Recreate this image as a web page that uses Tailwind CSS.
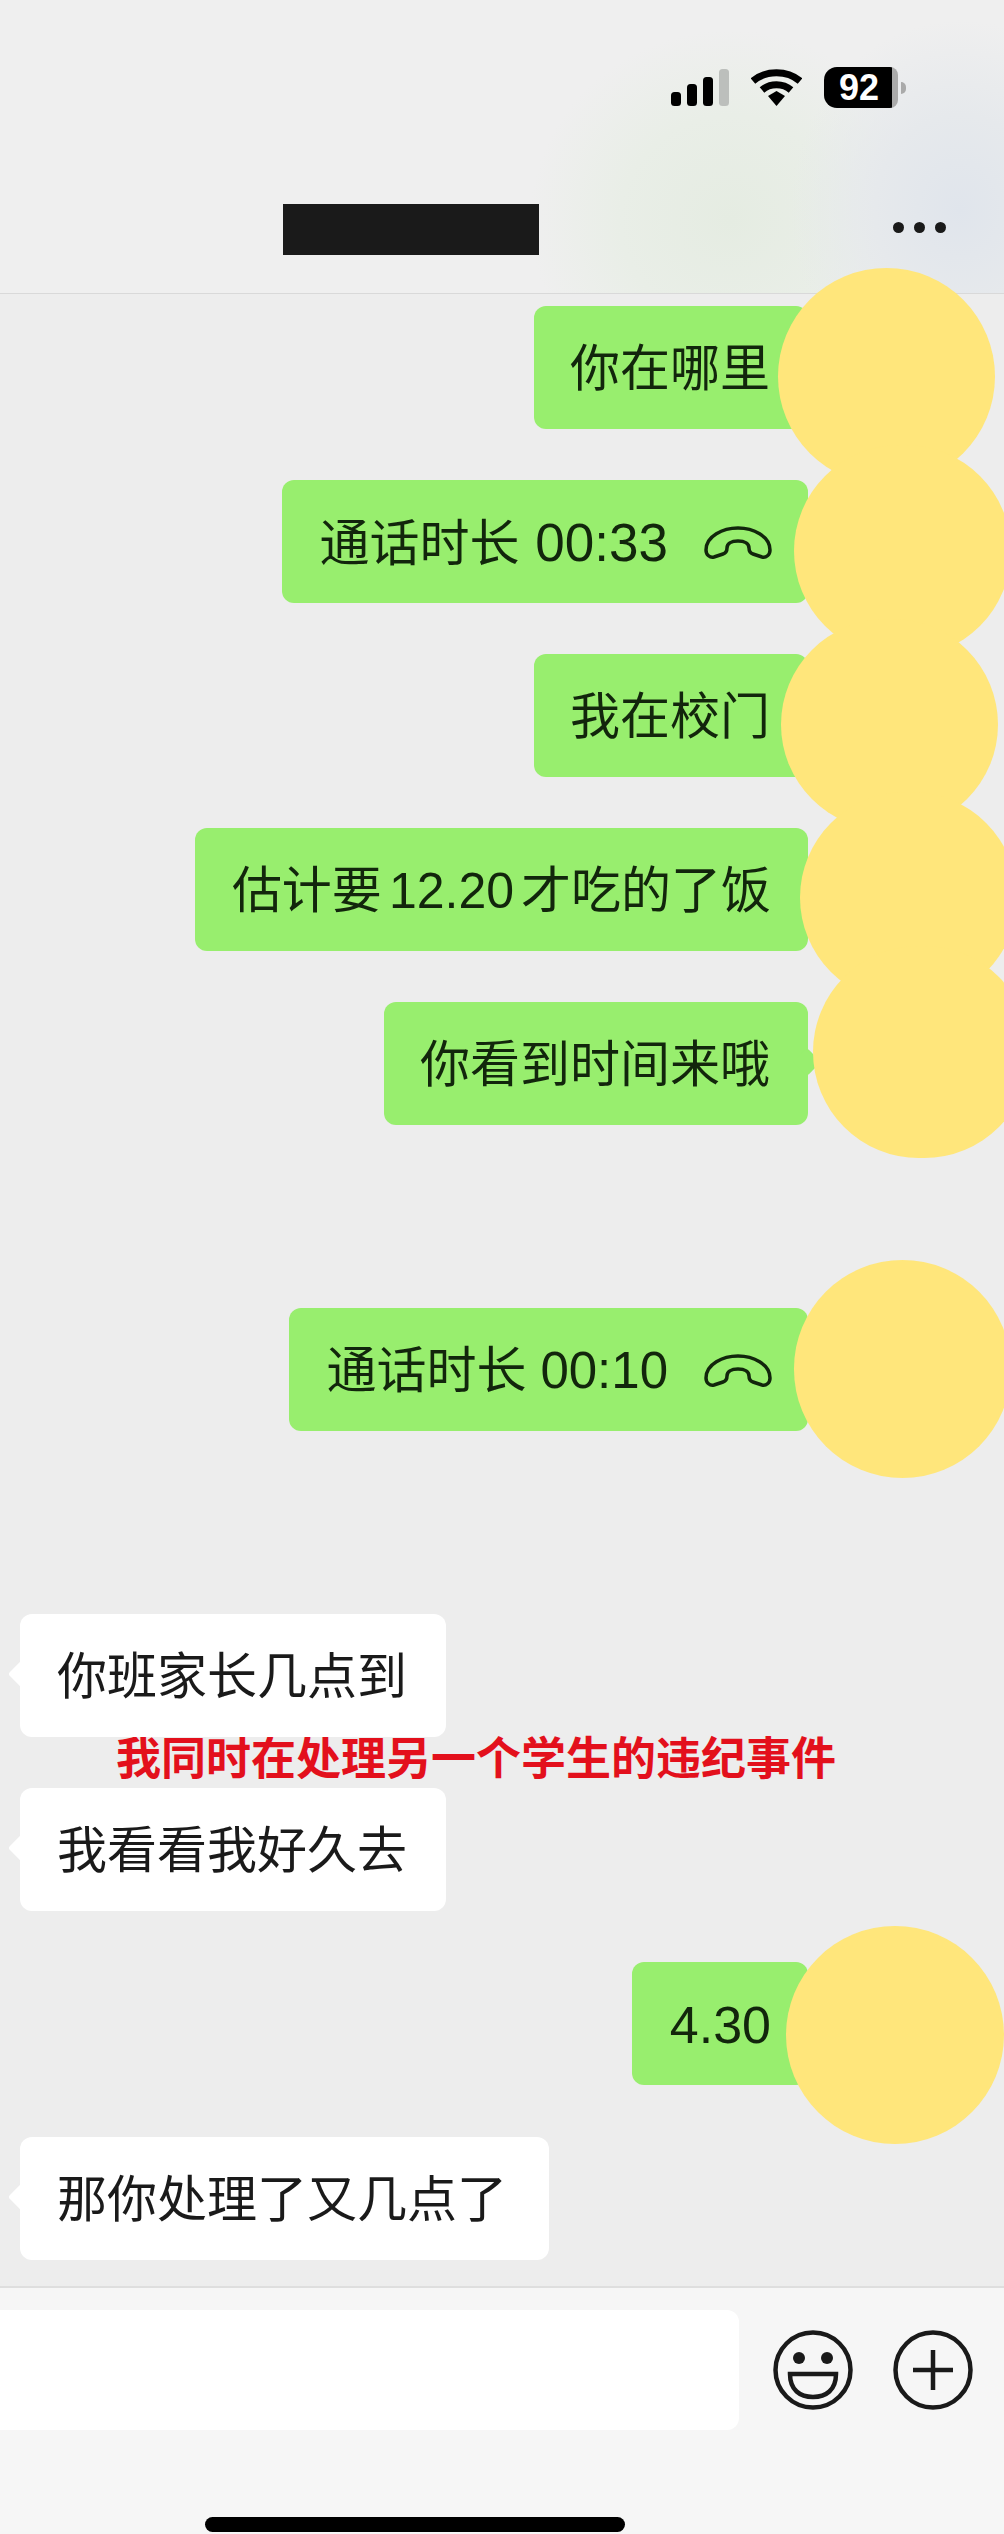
<!DOCTYPE html>
<html lang="zh-CN">
<head>
    <meta charset="UTF-8">
    <title>聊天记录</title>
    <script src="https://cdn.jsdelivr.net/npm/@tailwindcss/browser@4"></script>
</head>
<body class="bg-[#ededed]">
<div class="relative flex flex-col w-[1004px] h-[2534px] overflow-hidden bg-[#ededed] text-[#1a1a1a] text-[50px] font-['Liberation_Sans','Noto_Sans_CJK_SC',sans-serif]">

    <!-- status bar + title -->
    <div class="h-[294px] shrink-0 pt-[67px] border-b border-[#d9d9d9] bg-[#efefef] bg-[radial-gradient(ellipse_170px_190px_at_960px_210px,#e0e5ec_0%,#e6e9ec_50%,transparent_100%),radial-gradient(ellipse_200px_190px_at_730px_220px,#e5ece2_0%,#e9eee7_55%,transparent_100%)]">
        <div class="flex justify-end items-center gap-[22px] pr-[98px] h-[41px]">
            <svg class="w-[58px] h-[37px]" viewBox="0 0 58 37">
                <rect x="0" y="23" width="10" height="14" rx="3.5" fill="#000"/>
                <rect x="16" y="15" width="10" height="22" rx="3.5" fill="#000"/>
                <rect x="32" y="8" width="10" height="29" rx="3.5" fill="#000"/>
                <rect x="48" y="0" width="10" height="37" rx="3.5" fill="#bcbfbc"/>
            </svg>
            <svg class="w-[51px] h-[37px]" viewBox="0 0 51 37">
                <path d="M2 12 C15 1 36 1 49 12" fill="none" stroke="#000" stroke-width="7"/>
                <path d="M11 21 C19 14 32 14 40 21" fill="none" stroke="#000" stroke-width="7"/>
                <path d="M17 27 L25.5 22 L34 27 L25.5 37 Z" fill="#000"/>
            </svg>
            <div class="flex items-center">
                <div class="flex items-center justify-center w-[74px] h-[41px] pr-[4px] rounded-l-[13px] rounded-r-[8px] bg-[linear-gradient(to_right,#000_92%,#aaa_92%)] text-white text-[36px] font-bold">92</div>
                <div class="ml-[3px] w-[5px] h-[12px] rounded-r-full bg-[#aaa]"></div>
            </div>
        </div>
        <div class="flex items-center mt-[96px] pl-[283px] pr-[58px]">
            <div class="w-[256px] h-[51px] bg-[#1a1a1a]"></div>
            <div class="flex gap-[10px] ml-auto -mt-[5px]">
                <div class="w-[11px] h-[11px] rounded-full bg-[#1a1a1a]"></div>
                <div class="w-[11px] h-[11px] rounded-full bg-[#1a1a1a]"></div>
                <div class="w-[11px] h-[11px] rounded-full bg-[#1a1a1a]"></div>
            </div>
        </div>
    </div>

    <!-- messages -->
    <div class="flex-1 flex flex-col pt-[12px]">
        <div class="flex flex-col items-end gap-[51px] pr-[196px] text-[#12260c]">
            <div class="relative flex items-center h-[123px] pt-[3px] pl-[36px] pr-[38px] rounded-[12px] bg-[#98ee6e]">
                你在哪里
                <div class="absolute -right-[9px] top-[50px] w-[20px] h-[20px] rotate-45 rounded-[3px] bg-[#98ee6e]"></div>
            </div>
            <div class="relative flex items-center h-[123px] pt-[3px] pl-[37px] pr-[33px] rounded-[12px] bg-[#98ee6e]">
                <span>通话时长 <span class="ml-[2px] text-[53px]">00:33</span></span>
                <svg class="w-[74px] h-[34px] ml-[33px]" viewBox="0 0 70 34">
                    <path d="M3 24 C3 10 20 2 35 2 C50 2 67 10 67 24 C67 29 63 32 59 31 L50 28 C47 27 46 25 46 22 C46 18 42 15 35 15 C28 15 24 18 24 22 C24 25 23 27 20 28 L11 31 C7 32 3 29 3 24 Z" fill="none" stroke="#12260c" stroke-width="3.5"/>
                </svg>
            </div>
            <div class="relative flex items-center h-[123px] pt-[3px] pl-[36px] pr-[38px] rounded-[12px] bg-[#98ee6e]">我在校门</div>
            <div class="relative flex items-center h-[123px] pt-[3px] px-[37px] rounded-[12px] bg-[#98ee6e]">
                <span>估计要<span class="mx-[7px]">12.20</span>才吃的了饭</span>
            </div>
            <div class="relative flex items-center h-[123px] pt-[3px] pl-[36px] pr-[38px] rounded-[12px] bg-[#98ee6e]">
                你看到时间来哦
                <div class="absolute -right-[9px] top-[50px] w-[20px] h-[20px] rotate-45 rounded-[3px] bg-[#98ee6e]"></div>
            </div>
        </div>

        <div class="flex justify-end pr-[196px] mt-[183px] text-[#12260c]">
            <div class="relative flex items-center h-[123px] pt-[3px] pl-[37px] pr-[33px] rounded-[12px] bg-[#98ee6e]">
                <span>通话时长 <span class="text-[51px]">00:10</span></span>
                <svg class="w-[74px] h-[34px] ml-[33px]" viewBox="0 0 70 34">
                    <path d="M3 24 C3 10 20 2 35 2 C50 2 67 10 67 24 C67 29 63 32 59 31 L50 28 C47 27 46 25 46 22 C46 18 42 15 35 15 C28 15 24 18 24 22 C24 25 23 27 20 28 L11 31 C7 32 3 29 3 24 Z" fill="none" stroke="#12260c" stroke-width="3.5"/>
                </svg>
            </div>
        </div>

        <div class="flex mt-[183px] pl-[20px]">
            <div class="relative flex items-center h-[123px] pt-[3px] pl-[37px] pr-[39px] rounded-[12px] bg-white">
                <div class="absolute -left-[8px] top-[50px] w-[20px] h-[20px] rotate-45 rounded-[3px] bg-white"></div>
                <span class="relative">你班家长几点到</span>
            </div>
        </div>
        <div class="h-[51px] pl-[116px] pt-[1px] text-[45px] leading-[44px] whitespace-nowrap font-bold text-[#e3101c]">我同时在处理另一个学生的违纪事件</div>
        <div class="flex pl-[20px]">
            <div class="relative flex items-center h-[123px] pt-[3px] pl-[37px] pr-[39px] rounded-[12px] bg-white">
                <div class="absolute -left-[8px] top-[50px] w-[20px] h-[20px] rotate-45 rounded-[3px] bg-white"></div>
                <span class="relative">我看看我好久去</span>
            </div>
        </div>

        <div class="flex justify-end pr-[196px] mt-[51px] text-[#12260c]">
            <div class="flex items-center h-[123px] pt-[3px] pl-[38px] pr-[37px] text-[52px] rounded-[12px] bg-[#98ee6e]">4.30</div>
        </div>

        <div class="flex mt-[52px] pl-[20px]">
            <div class="relative flex items-center h-[123px] pt-[3px] pl-[37px] pr-[42px] rounded-[12px] bg-white">
                <div class="absolute -left-[8px] top-[50px] w-[20px] h-[20px] rotate-45 rounded-[3px] bg-white"></div>
                <span class="relative">那你处理了又几点了</span>
            </div>
        </div>
    </div>

    <!-- input bar -->
    <div class="h-[248px] shrink-0 pt-[22px] border-t-2 border-[#dedede] bg-[#f6f6f6]">
        <div class="flex items-center h-[120px]">
            <div class="w-[739px] h-[120px] rounded-r-[12px] bg-white"></div>
            <svg class="w-[80px] h-[80px] ml-[34px]" viewBox="0 0 80 80">
                <circle cx="40" cy="40" r="37.5" fill="none" stroke="#1a1a1a" stroke-width="4.5"/>
                <ellipse cx="26" cy="28" rx="6" ry="6" fill="#1a1a1a"/>
                <ellipse cx="54" cy="28" rx="6" ry="6" fill="#1a1a1a"/>
                <path d="M17 44 H63 C63 60 53 67 40 67 C27 67 17 60 17 44 Z" fill="none" stroke="#1a1a1a" stroke-width="4.5"/>
            </svg>
            <svg class="w-[80px] h-[80px] ml-[40px]" viewBox="0 0 80 80">
                <circle cx="40" cy="40" r="37.5" fill="none" stroke="#1a1a1a" stroke-width="4.5"/>
                <path d="M20 40 H60 M40 20 V60" fill="none" stroke="#1a1a1a" stroke-width="4.5"/>
            </svg>
        </div>
        <div class="w-[420px] h-[15px] ml-[205px] mt-[87px] rounded-full bg-black"></div>
    </div>

    <!-- yellow blobs covering the avatars -->
    <div class="absolute left-[778px] top-[268px] w-[217px] h-[217px] rounded-full bg-[#ffe67b]"></div>
    <div class="absolute left-[794px] top-[445px] w-[217px] h-[212px] rounded-full bg-[#ffe67b]"></div>
    <div class="absolute left-[781px] top-[619px] w-[217px] h-[211px] rounded-full bg-[#ffe67b]"></div>
    <div class="absolute left-[800px] top-[792px] w-[217px] h-[211px] rounded-full bg-[#ffe67b]"></div>
    <div class="absolute left-[813px] top-[946px] w-[217px] h-[212px] rounded-full bg-[#ffe67b]"></div>
    <div class="absolute left-[794px] top-[1260px] w-[217px] h-[218px] rounded-full bg-[#ffe67b]"></div>
    <div class="absolute left-[786px] top-[1926px] w-[218px] h-[218px] rounded-full bg-[#ffe67b]"></div>
</div>
</body>
</html>
